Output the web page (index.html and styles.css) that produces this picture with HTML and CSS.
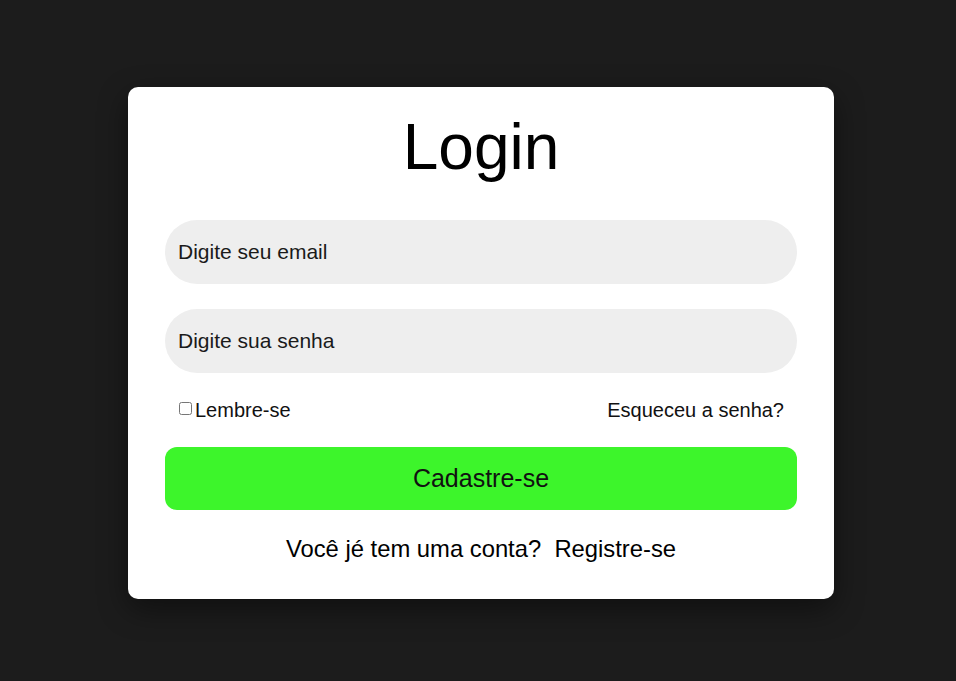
FILE: index.html
```html
<!DOCTYPE html>
<html lang="pt-BR">
<head>
<meta charset="utf-8">
<title>Login</title>
<link rel="stylesheet" href="styles.css">
</head>
<body>
<main class="page">
  <form class="card">
    <h1 class="title">Login</h1>
    <div class="fields">
      <input class="field" type="email" placeholder="Digite seu email">
      <input class="field" type="password" placeholder="Digite sua senha">
      <div class="options">
        <label class="remember"><input class="check" type="checkbox">Lembre-se</label>
        <a class="forgot" href="#">Esqueceu a senha?</a>
      </div>
      <button class="submit" type="button">Cadastre-se</button>
      <p class="register">Você jé tem uma conta?&nbsp; <a href="#">Registre-se</a></p>
    </div>
  </form>
</main>
</body>
</html>
```
FILE: styles.css
```css
* { box-sizing: border-box; }
html, body { margin: 0; height: 100%; }
body {
  background: #1c1c1c;
  font-family: "Liberation Sans", Arial, sans-serif;
  color: #000;
}
.page {
  min-height: 100%;
  display: flex;
  align-items: center;
  justify-content: center;
  padding: 5px 0 0 6px;
}
.card {
  width: 706px;
  background: #fff;
  border-radius: 10px;
  padding: 23px 37px 36px;
  box-shadow: 0 10px 30px rgba(0, 0, 0, 0.45);
}
.title {
  margin: 0 0 36px;
  font-size: 64px;
  font-weight: 400;
  line-height: normal;
  text-align: center;
}
.fields {
  display: flex;
  flex-direction: column;
  gap: 25px;
}
.field {
  height: 64px;
  border: none;
  outline: none;
  border-radius: 32px;
  background: #eeeeee;
  padding: 0 13px;
  font-family: inherit;
  font-size: 21px;
  color: #111;
}
.field::placeholder { color: #1a1a1a; opacity: 1; }
.options {
  display: flex;
  justify-content: space-between;
  align-items: center;
  padding: 1px 13px 0 13px;
  font-size: 20px;
  line-height: 23px;
}
.remember {
  display: flex;
  align-items: center;
  color: #111;
}
.check {
  width: 13px;
  height: 13px;
  margin: 0 3px 4px 1px;
}
.forgot {
  color: #111;
  text-decoration: none;
}
.submit {
  height: 63px;
  border: none;
  border-radius: 12px;
  background: #3df52b;
  font-family: inherit;
  font-size: 25px;
  color: #111;
}
.register {
  margin: 0;
  text-align: center;
  font-size: 23.8px;
  line-height: 28px;
}
.register a { color: #000; text-decoration: none; }
```
